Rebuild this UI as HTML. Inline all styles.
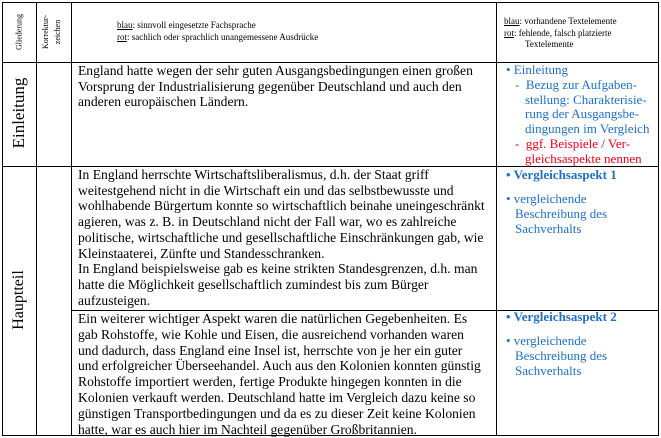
<!DOCTYPE html>
<html><head><meta charset="utf-8"><style>
body{margin:0;width:661px;height:438px;background:#fff;position:relative;overflow:hidden;font-family:"Liberation Serif",serif;color:#000}
.l{position:absolute;background:#000}
.t{position:absolute;white-space:nowrap}
.body{font-size:13.6px;line-height:15.7px;left:78px}
.sm{font-size:9px;line-height:11.5px}
.b{color:#1f6fc5}
.r{color:#e8001c}
.rot{position:absolute;transform:translate(-50%,-50%) rotate(-90deg);white-space:nowrap;text-align:center}
.rc{font-size:13px;line-height:14.7px}
</style></head><body>
<div class="l" style="left:2px;top:2px;width:657px;height:1px"></div>
<div class="l" style="left:2px;top:435px;width:657px;height:1px"></div>
<div class="l" style="left:2px;top:2px;width:1px;height:434px"></div>
<div class="l" style="left:658px;top:2px;width:1px;height:434px"></div>
<div class="l" style="left:36px;top:2px;width:1px;height:434px"></div>
<div class="l" style="left:71px;top:2px;width:1px;height:434px"></div>
<div class="l" style="left:496px;top:2px;width:1px;height:434px"></div>
<div class="l" style="left:2px;top:62px;width:657px;height:1px"></div>
<div class="l" style="left:2px;top:166px;width:657px;height:1px"></div>
<div class="l" style="left:71px;top:310px;width:588px;height:1px"></div>

<div class="rot sm" style="left:19px;top:32px;font-size:8px">Gliederung</div>
<div class="rot sm" style="left:52px;top:32px;line-height:12px;font-size:8px">Korrektur-<br>zeichen</div>
<div class="t sm" style="left:117px;top:20px"><u>blau</u>: sinnvoll eingesetzte Fachsprache<br><u>rot</u>: sachlich oder sprachlich unangemessene Ausdrücke</div>
<div class="t sm" style="left:504px;top:16px"><u>blau</u>: vorhandene Textelemente<br><u>rot</u>: fehlende, falsch platzierte<br><span style="padding-left:21px">Textelemente</span></div>

<div class="rot" style="left:19px;top:113px;font-size:17px">Einleitung</div>
<div class="rot" style="left:19px;top:300px;font-size:16px">Hauptteil</div>

<div class="t body" style="top:63px">England hatte wegen der sehr guten Ausgangsbedingungen einen großen<br>Vorsprung der Industrialisierung gegenüber Deutschland und auch den<br>anderen europäischen Ländern.</div>

<div class="t body" style="top:167px">In England herrschte Wirtschaftsliberalismus, d.h. der Staat griff<br>weitestgehend nicht in die Wirtschaft ein und das selbstbewusste und<br>wohlhabende Bürgertum konnte so wirtschaftlich beinahe uneingeschränkt<br>agieren, was z. B. in Deutschland nicht der Fall war, wo es zahlreiche<br>politische, wirtschaftliche und gesellschaftliche Einschränkungen gab, wie<br>Kleinstaaterei, Zünfte und Standesschranken.<br>In England beispielsweise gab es keine strikten Standesgrenzen, d.h. man<br>hatte die Möglichkeit gesellschaftlich zumindest bis zum Bürger<br>aufzusteigen.</div>

<div class="t body" style="top:311px;line-height:15.8px">Ein weiterer wichtiger Aspekt waren die natürlichen Gegebenheiten. Es<br>gab Rohstoffe, wie Kohle und Eisen, die ausreichend vorhanden waren<br>und dadurch, dass England eine Insel ist, herrschte von je her ein guter<br>und erfolgreicher Überseehandel. Auch aus den Kolonien konnten günstig<br>Rohstoffe importiert werden, fertige Produkte hingegen konnten in die<br>Kolonien verkauft werden. Deutschland hatte im Vergleich dazu keine so<br>günstigen Transportbedingungen und da es zu dieser Zeit keine Kolonien<br>hatte, war es auch hier im Nachteil gegenüber Großbritannien.</div>

<div class="t rc b" style="left:506px;top:63px">• Einleitung</div>
<div class="t rc b" style="left:515px;top:78px">-&nbsp; Bezug zur Aufgaben-</div>
<div class="t rc b" style="left:525px;top:92.7px">stellung: Charakterisie-<br>rung der Ausgangsbe-<br>dingungen im Vergleich</div>
<div class="t rc r" style="left:515px;top:136.8px">-&nbsp; ggf. Beispiele / Ver-</div>
<div class="t rc r" style="left:525px;top:151.5px">gleichsaspekte nennen</div>

<div class="t b" style="left:506px;top:167px;font-size:13px;font-weight:bold">• Vergleichsaspekt 1</div>
<div class="t b" style="left:506px;top:191px;font-size:13px;line-height:15px">• vergleichende<br><span style="padding-left:9px">Beschreibung des</span><br><span style="padding-left:9px">Sachverhalts</span></div>
<div class="t b" style="left:506px;top:309px;font-size:13px;font-weight:bold">• Vergleichsaspekt 2</div>
<div class="t b" style="left:506px;top:333px;font-size:13px;line-height:15px">• vergleichende<br><span style="padding-left:9px">Beschreibung des</span><br><span style="padding-left:9px">Sachverhalts</span></div>
</body></html>
